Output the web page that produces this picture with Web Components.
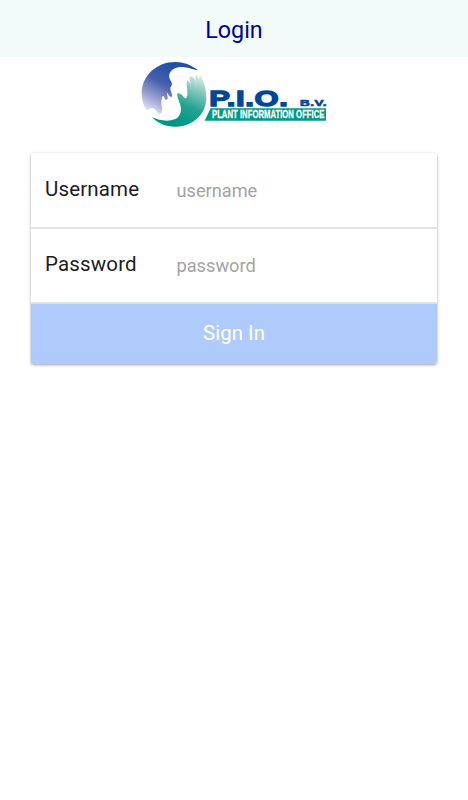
<!DOCTYPE html>
<html lang="en">
<head>
<meta charset="utf-8">
<title>Login</title>
<style>
   body {
      margin: 0;
      background: #fff;
      font-family: Roboto, "Liberation Sans", sans-serif;
   }
</style>
</head>
<body>
<login-page>
   <page-header slot="header">Login</page-header>
   <pio-logo slot="logo"></pio-logo>
   <form-card>
      <form-field label="Username" type="text" placeholder="username"></form-field>
      <form-field label="Password" type="password" placeholder="password"></form-field>
      <submit-button>Sign In</submit-button>
   </form-card>
</login-page>

<script>
class LoginPage extends HTMLElement {
   constructor() {
      super();
      this.attachShadow({ mode: 'open' }).innerHTML = `
         <style>
            :host {
               display: flex;
               flex-direction: column;
               min-height: 100vh;
            }
            .logo {
               display: flex;
               justify-content: center;
               padding-top: 4px;
            }
            main {
               padding: 24px 31px;
            }
         </style>
         <slot name="header"></slot>
         <div class="logo"><slot name="logo"></slot></div>
         <main><slot></slot></main>
      `;
   }
}

class PageHeader extends HTMLElement {
   constructor() {
      super();
      this.attachShadow({ mode: 'open' }).innerHTML = `
         <style>
            :host {
               display: flex;
               align-items: center;
               justify-content: center;
               box-sizing: border-box;
               height: 57px;
               padding-top: 3px;
               background: #f2fbfa;
               color: #00009b;
               font-size: 23.3px;
            }
         </style>
         <slot></slot>
      `;
   }
}

class PioLogo extends HTMLElement {
   constructor() {
      super();
      this.attachShadow({ mode: 'open' }).innerHTML = `
         <style>
            :host {
               display: block;
               width: 186px;
               height: 68px;
            }
            svg {
               display: block;
            }
            text {
               font-family: "Liberation Sans", sans-serif;
               font-weight: 700;
            }
         </style>
         <svg width="186" height="68" viewBox="15 15 558 204">
            <defs>
               <linearGradient id="blue" gradientUnits="userSpaceOnUse" x1="115" y1="35" x2="42" y2="170">
                  <stop offset="0" stop-color="#2050a5"/>
                  <stop offset=".38" stop-color="#4561ae"/>
                  <stop offset=".7" stop-color="#9a9fd0"/>
                  <stop offset="1" stop-color="#e4e6f5"/>
               </linearGradient>
               <linearGradient id="green" gradientUnits="userSpaceOnUse" x1="125" y1="195" x2="188" y2="58">
                  <stop offset="0" stop-color="#009783"/>
                  <stop offset=".35" stop-color="#25a391"/>
                  <stop offset=".7" stop-color="#83c6bb"/>
                  <stop offset="1" stop-color="#d8eeea"/>
               </linearGradient>
            </defs>
            <!-- upper hand -->
            <path fill="url(#blue)" d="M186 43 C165 26 143 18 118 18 C62 18 18 58 17 111 C17 130 21 146 30 160 C37 166 42 155 49 156 C57 155 61 169 69 173 C76 175 79 168 78 157 C76 145 75 135 78 126 C80 116 85 119 86 127 C87 135 96 133 95 124 L92 108 C96 115 106 129 108 121 C110 115 104 108 103 98 C102 91 109 89 108 83 C105 73 97 66 100 55 C106 37 126 31 146 34 C163 36 175 42 186 43 Z"/>
            <!-- lower hand -->
            <path fill="url(#green)" d="M48 184 C68 205 95 213 121 212 C171 210 210 176 211 126 C211 101 206 80 195 61 C191 58 189 64 190 72 C187 66 183 55 179 57 C176 60 180 68 179 74 C174 67 168 58 162 62 C159 67 164 78 163 84 C159 80 157 71 153 74 C150 82 154 94 154 108 C155 119 152 128 147 127 C141 120 134 110 125 112 C121 116 126 128 131 141 C139 162 135 182 116 190 C94 198 70 193 48 184 Z"/>
            <path fill="none" stroke="#fff" stroke-opacity=".35" stroke-width="2" d="M163 84 L166 101 M179 74 L180 96"/>
            <text transform="translate(220 149) scale(1.43 1)" font-size="65" textLength="165" fill="#004799" stroke="#004799" stroke-width="4">P.I.O.</text>
            <text transform="translate(492 149) scale(1.45 1)" font-size="28" textLength="55" fill="#004799" stroke="#004799" stroke-width="2">B.V.</text>
            <path fill="#009982" d="M224 157 H570 V194 H206 Z"/>
            <text transform="translate(228 187) scale(.7 1)" font-size="33" textLength="482" fill="#fff" stroke="#fff" stroke-width=".8">PLANT INFORMATION OFFICE</text>
         </svg>
      `;
   }
}

class FormCard extends HTMLElement {
   constructor() {
      super();
      this.attachShadow({ mode: 'open' }).innerHTML = `
         <style>
            :host {
               display: block;
               overflow: hidden;
               border-radius: 3px;
               background: #fff;
               box-shadow: 0 1px 3px rgba(0, 0, 0, .38);
            }
         </style>
         <slot></slot>
      `;
   }
}

class FormField extends HTMLElement {
   constructor() {
      super();
      this.attachShadow({ mode: 'open' }).innerHTML = `
         <style>
            :host {
               display: block;
               border-bottom: 2px solid #e2e2e2;
            }
            label {
               display: flex;
               align-items: center;
               box-sizing: border-box;
               height: 73.5px;
               padding: 0 14px 2px;
               color: #1c1c1c;
               font-size: 20.5px;
            }
            span {
               flex: 0 0 131.5px;
               letter-spacing: .15px;
            }
            input {
               flex: 1;
               min-width: 0;
               margin: 3px 0 0;
               padding: 0;
               border: 0;
               outline: 0;
               background: none;
               color: inherit;
               font: 18.2px Roboto, "Liberation Sans", sans-serif;
            }
            input::placeholder {
               color: #a3a3a3;
               opacity: 1;
            }
         </style>
         <label>
            <span>${this.getAttribute('label')}</span>
            <input type="${this.getAttribute('type')}" placeholder="${this.getAttribute('placeholder')}">
         </label>
      `;
   }
}

class SubmitButton extends HTMLElement {
   constructor() {
      super();
      this.attachShadow({ mode: 'open' }).innerHTML = `
         <style>
            :host {
               display: block;
            }
            button {
               display: block;
               width: 100%;
               height: 60px;
               padding: 0 0 2px;
               border: 0;
               background: #aecbfb;
               color: #fff;
               font: 20.5px Roboto, "Liberation Sans", sans-serif;
            }
         </style>
         <button type="button"><slot></slot></button>
      `;
   }
}

customElements.define('login-page', LoginPage);
customElements.define('page-header', PageHeader);
customElements.define('pio-logo', PioLogo);
customElements.define('form-card', FormCard);
customElements.define('form-field', FormField);
customElements.define('submit-button', SubmitButton);
</script>
</body>
</html>
